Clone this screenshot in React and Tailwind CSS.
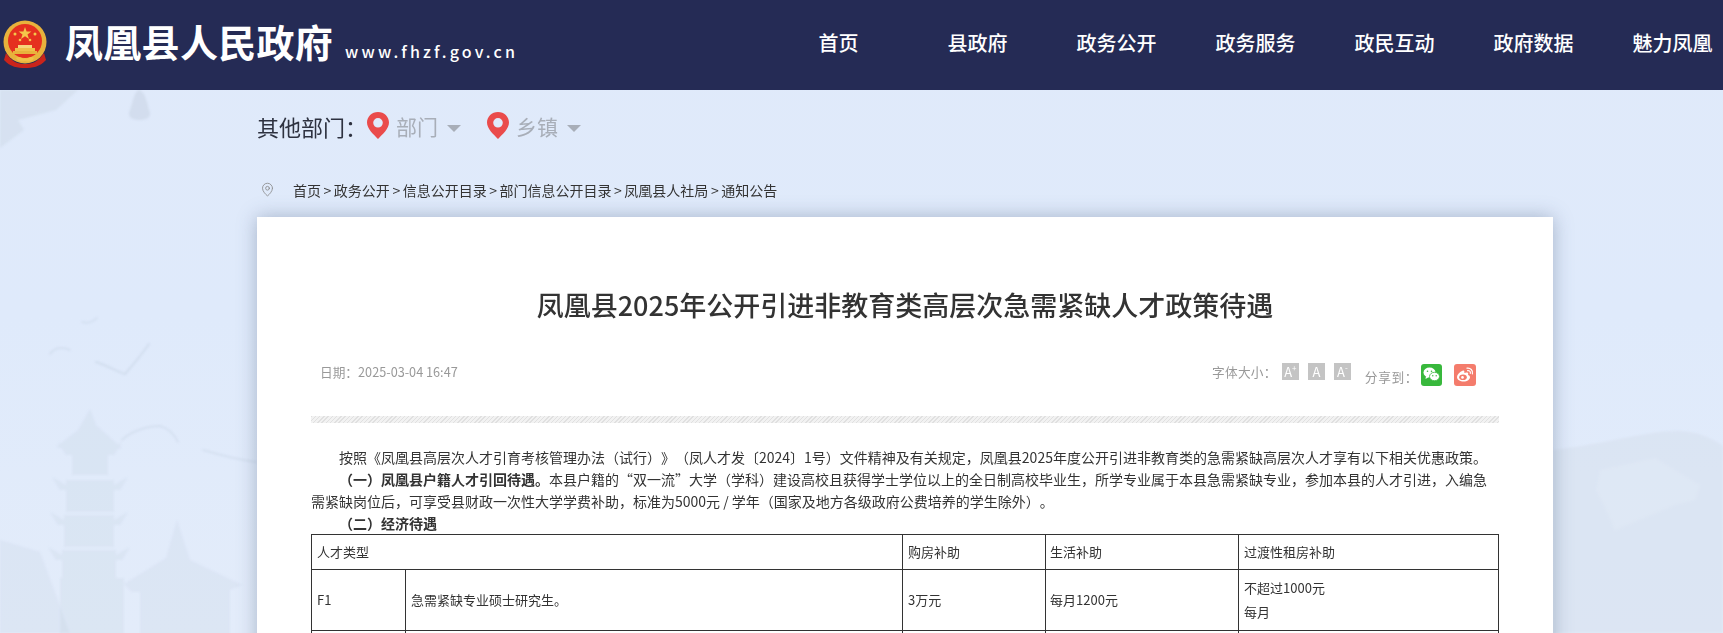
import { MapPin } from "lucide-react";

const font = { fontFamily: '"Noto Sans CJK SC", "Noto Sans", sans-serif' };
const navItems = ["首页", "县政府", "政务公开", "政务服务", "政民互动", "政府数据", "魅力凤凰"];

function Emblem() {
  return (
    <svg width="46" height="48" viewBox="0 0 46 48" className="mb-[2px] shrink-0">
      <circle cx="23" cy="22" r="21.5" fill="#e8b23c" />
      <circle cx="23" cy="21" r="17" fill="#e5301f" />
      <polygon points="23,7 24.6,11.6 29.4,11.6 25.5,14.4 27,19 23,16.2 19,19 20.5,14.4 16.6,11.6 21.4,11.6" fill="#f4c64a" />
      <circle cx="13" cy="14" r="1.5" fill="#f4c64a" />
      <circle cx="33" cy="14" r="1.5" fill="#f4c64a" />
      <circle cx="18" cy="20" r="1.3" fill="#f4c64a" />
      <circle cx="28" cy="20" r="1.3" fill="#f4c64a" />
      <rect x="13" y="28" width="20" height="3" fill="#f0c04a" />
      <rect x="16" y="25" width="14" height="3" fill="#f6d67a" />
      <rect x="11" y="31" width="24" height="3" fill="#e8b23c" />
      <path d="M4 33 C10 42 16 44 23 44 C30 44 36 42 42 33 L44 40 C38 47 30 48 23 48 C16 48 8 47 2 40 Z" fill="#c9241b" />
      <path d="M14 38 C18 35 21 40 23 38 C25 40 28 35 32 38 C30 42 26 42 23 41 C20 42 16 42 14 38 Z" fill="#f0c04a" />
    </svg>
  );
}

function Pagoda() {
  const tiers = [
    [58, 122, 437, 30],
    [52, 128, 472, 32],
    [50, 128, 507, 32],
    [48, 130, 542, 34],
  ];
  return (
    <g fill="#b4c4d4" opacity="0.16">
      <polygon points="90,409 96,425 122,448 112,450 68,450 56,447 78,430" />
      {tiers.map(([l, r, y, h]) => (
        <g key={y}>
          <rect x={l + 14} y={y + 8} width={r - l - 28} height={h} />
          <polygon points={`${l},${y + 5} ${l + 14},${y + 13} ${r - 14},${y + 13} ${r},${y + 5} ${r - 8},${y + 18} ${l + 8},${y + 18}`} />
        </g>
      ))}
      <rect x="60" y="578" width="64" height="60" />
    </g>
  );
}

function PageBackground() {
  return (
    <svg className="absolute left-0 top-0" width="1723" height="633" viewBox="0 0 1723 633">
      <defs>
        <linearGradient id="sky" x1="0" y1="0" x2="0" y2="1">
          <stop offset="0" stopColor="#e0eafa" />
          <stop offset="0.5" stopColor="#dfeafb" />
          <stop offset="1" stopColor="#e3ecfa" />
        </linearGradient>
        <filter id="soft">
          <feGaussianBlur stdDeviation="1.2" />
        </filter>
      </defs>
      <rect width="1723" height="633" fill="url(#sky)" />
      <g filter="url(#soft)">
        <polygon points="0,90 78,90 56,110 18,120 24,130 0,148" fill="#c6d2df" opacity="0.35" />
        <path d="M139 90 C145 92 147 102 149 110 C152 116 148 120 139 120 C131 120 127 116 130 110 C133 102 134 92 139 90 Z" fill="#b9c7d6" opacity="0.35" />
        <g fill="none" stroke="#b4c3d3" opacity="0.3" strokeLinecap="round">
          <path d="M96 362 C108 366 118 372 125 374 C132 366 142 354 149 344" strokeWidth="2" />
          <path d="M50 354 C54 348 62 346 70 350" strokeWidth="1.5" />
          <path d="M82 322 C86 323 90 324 97 318" strokeWidth="1.5" />
          <path d="M122 440 C132 430 150 426 160 426 C168 428 174 434 178 442" strokeWidth="1.5" />
          <path d="M203 450 C220 455 240 460 256 462" strokeWidth="1.5" />
        </g>
        <Pagoda />
        <g fill="#b8c8d6" opacity="0.16">
          <polygon points="177,520 190,560 242,585 225,592 132,592 124,584 166,558" />
          <rect x="140" y="590" width="90" height="48" />
          <polygon points="0,540 40,552 70,633 0,633" />
        </g>
        <path d="M1553 450 C1600 445 1650 430 1680 431 C1700 432 1715 440 1723 446 L1723 633 L1553 633 Z" fill="#d2dde9" opacity="0.4" />
        <polygon points="1600,470 1655,458 1700,485 1695,500 1675,505 1615,530 1604,505 1596,490" fill="#e3ecf7" opacity="0.45" />
      </g>
    </svg>
  );
}

function FontBox({ sup }) {
  return (
    <span className="flex h-[17px] w-[17px] items-start justify-center bg-[#c4c4c4] text-[13px] leading-[17px] text-white">
      A<span className="text-[8px] leading-[10px]">{sup}</span>
    </span>
  );
}

function WechatIcon() {
  return (
    <span className="flex h-[22px] w-[21px] items-center justify-center rounded-[3px] bg-[#38b83c]">
      <svg width="17" height="15" viewBox="0 0 17 15">
        <ellipse cx="6.5" cy="5.5" rx="6" ry="5" fill="#fff" />
        <polygon points="3,9 2.5,12 6,10" fill="#fff" />
        <ellipse cx="11.5" cy="9.5" rx="5" ry="4.2" fill="#fff" stroke="#38b83c" strokeWidth="0.8" />
        <circle cx="4.5" cy="4.2" r="0.8" fill="#38b83c" />
        <circle cx="8.5" cy="4.2" r="0.8" fill="#38b83c" />
        <circle cx="9.8" cy="8.8" r="0.7" fill="#38b83c" />
        <circle cx="13.2" cy="8.8" r="0.7" fill="#38b83c" />
      </svg>
    </span>
  );
}

function WeiboIcon() {
  return (
    <span className="flex h-[22px] w-[22px] items-center justify-center rounded-[3px] bg-[#f47c6c]">
      <svg width="18" height="15" viewBox="0 0 18 15">
        <path d="M7 3.5 C3.5 5 1 7.5 1 10 C1 12.8 4.2 14.5 7.5 14.5 C11.5 14.5 14 12.2 14 10.2 C14 8.8 12.6 8.3 12 8.1 C12.4 7 12.4 6 11.4 5.6 C10.4 5.2 9 5.7 8.3 6 C8.6 4.6 8.3 2.9 7 3.5 Z" fill="#fff" />
        <ellipse cx="7" cy="10.3" rx="3.8" ry="2.8" fill="#f47c6c" />
        <circle cx="6.5" cy="10.4" r="1.3" fill="#fff" />
        <path d="M11 1.2 C14.4 0.6 17.2 3.4 16.4 6.8 M11.6 3.6 C13.4 3.3 14.7 4.6 14.3 6.3" fill="none" stroke="#fff" strokeWidth="1.2" strokeLinecap="round" />
      </svg>
    </span>
  );
}

function RegionPicker({ label }) {
  return (
    <div className="mt-[2px] flex items-center">
      <svg width="22" height="27" viewBox="0 0 22 27" className="mb-[2px]">
        <path
          fillRule="evenodd"
          d="M11 0 C17.2 0 22 4.7 22 10.6 C22 16.8 15.4 22.6 11 27 C6.6 22.6 0 16.8 0 10.6 C0 4.7 4.8 0 11 0 Z M11 6 A4.8 4.8 0 1 0 11 15.6 A4.8 4.8 0 1 0 11 6 Z"
          fill="#ea4b4b"
        />
      </svg>
      <span className="ml-[7px] text-[21px] leading-none text-[#a8aeb8]">{label}</span>
      <span className="ml-[9px] mt-[3px] h-0 w-0 border-x-[7px] border-t-[7px] border-x-transparent border-t-[#a8aeb8]" />
    </div>
  );
}

export default function App() {
  return (
    <div className="relative h-[633px] w-[1723px] overflow-hidden [text-spacing-trim:space-all]" style={font}>
      <PageBackground />

      <header className="relative flex h-[90px] items-center overflow-hidden bg-[#252b55] text-white">
        <div className="flex w-[769px] shrink-0 items-center pl-[2px]">
          <Emblem />
          <h1 className="mb-[8px] ml-[17px] whitespace-nowrap text-[38px] font-bold leading-none tracking-[0.3px]">凤凰县人民政府</h1>
          <span className="ml-[12px] mt-[12px] whitespace-nowrap text-[16px] font-medium tracking-[3.15px]">www.fhzf.gov.cn</span>
        </div>
        <nav className="mb-[4px] flex shrink-0">
          {navItems.map((item) => (
            <a key={item} className="w-[139px] text-center text-[20px] font-medium">
              {item}
            </a>
          ))}
        </nav>
      </header>

      <div className="relative ml-[257px] w-[1296px]">
        <div className="flex h-[74px] items-center pb-[3px] text-[#2e3240]">
          <span className="w-[110px] text-[22px] leading-none">其他部门：</span>
          <RegionPicker label="部门" />
          <div className="ml-[26px]">
            <RegionPicker label="乡镇" />
          </div>
        </div>

        <div className="flex h-[53px] items-center text-[14px] text-[#333]">
          <MapPin size={15} strokeWidth={1.3} className="mb-[2px] ml-[3px] text-[#888]" />
          <span className="mb-[1px] ml-[18px] [word-spacing:-0.6px]">首页 &gt; 政务公开 &gt; 信息公开目录 &gt; 部门信息公开目录 &gt; 凤凰县人社局 &gt; 通知公告</span>
        </div>

        <main className="h-[500px] bg-white px-[54px] shadow-[0_0_18px_rgba(70,90,120,0.38)]">
          <h2 className="pt-[66px] text-center text-[27px] font-medium leading-[44px] text-[#333]">
            凤凰县2025年公开引进非教育类高层次急需紧缺人才政策待遇
          </h2>

          <div className="mt-[30px] flex h-[30px] items-center justify-between text-[12.7px] text-[#999]">
            <span className="ml-[9px]">日期：2025-03-04 16:47</span>
            <div className="flex items-center">
              <span className="mr-[5px] tracking-[0.3px]">字体大小：</span>
              <div className="flex gap-[9px]">
                <FontBox sup="+" />
                <FontBox />
                <FontBox sup="-" />
              </div>
              <span className="ml-[14px] mt-[10px] tracking-[0.6px]">分享到：</span>
              <div className="ml-[3px] mr-[23px] mt-[6px] flex gap-[12px]">
                <WechatIcon />
                <WeiboIcon />
              </div>
            </div>
          </div>

          <div className="mt-[29px] h-[7px] bg-[repeating-linear-gradient(135deg,#e0e0e0_0,#e0e0e0_1px,#f2f2f2_1px,#f2f2f2_3px)]" />

          <div className="mt-[23px] text-[14px] leading-[22px] text-[#333]">
            <p className="indent-[28px]">
              按照《凤凰县高层次人才引育考核管理办法（试行）》（凤人才发〔2024〕1号）文件精神及有关规定，凤凰县2025年度公开引进非教育类的急需紧缺高层次人才享有以下相关优惠政策。
            </p>
            <p className="indent-[28px]">
              <b>（一）凤凰县户籍人才引回待遇。</b>
              本县户籍的“双一流”大学（学科）建设高校且获得学士学位以上的全日制高校毕业生，所学专业属于本县急需紧缺专业，参加本县的人才引进，入编急需紧缺岗位后，可享受县财政一次性大学学费补助，标准为5000元 / 学年（国家及地方各级政府公费培养的学生除外）。
            </p>
            <p className="indent-[28px]">
              <b>（二）经济待遇</b>
            </p>
          </div>

          <table className="w-[1188px] table-fixed border-collapse text-[13px] text-[#333]">
            <colgroup>
              <col className="w-[94px]" />
              <col className="w-[497px]" />
              <col className="w-[143px]" />
              <col className="w-[193px]" />
              <col />
            </colgroup>
            <tbody>
              <tr className="h-[35px]">
                <td colSpan={2} className="border border-[#333] px-[5px]">人才类型</td>
                <td className="border border-[#333] px-[5px]">购房补助</td>
                <td className="border border-[#333] px-[4px]">生活补助</td>
                <td className="border border-[#333] px-[5px]">过渡性租房补助</td>
              </tr>
              <tr className="h-[61px]">
                <td className="border border-[#333] px-[5px]">F1</td>
                <td className="border border-[#333] px-[5px]">急需紧缺专业硕士研究生。</td>
                <td className="border border-[#333] px-[5px]">3万元</td>
                <td className="border border-[#333] px-[4px]">每月1200元</td>
                <td className="border border-[#333] px-[5px] leading-[24px]">
                  <p>不超过1000元</p>
                  <p>每月</p>
                </td>
              </tr>
              <tr className="h-[40px]">
                <td className="border border-[#333]" />
                <td className="border border-[#333]" />
                <td className="border border-[#333]" />
                <td className="border border-[#333]" />
                <td className="border border-[#333]" />
              </tr>
            </tbody>
          </table>
        </main>
      </div>
    </div>
  );
}
